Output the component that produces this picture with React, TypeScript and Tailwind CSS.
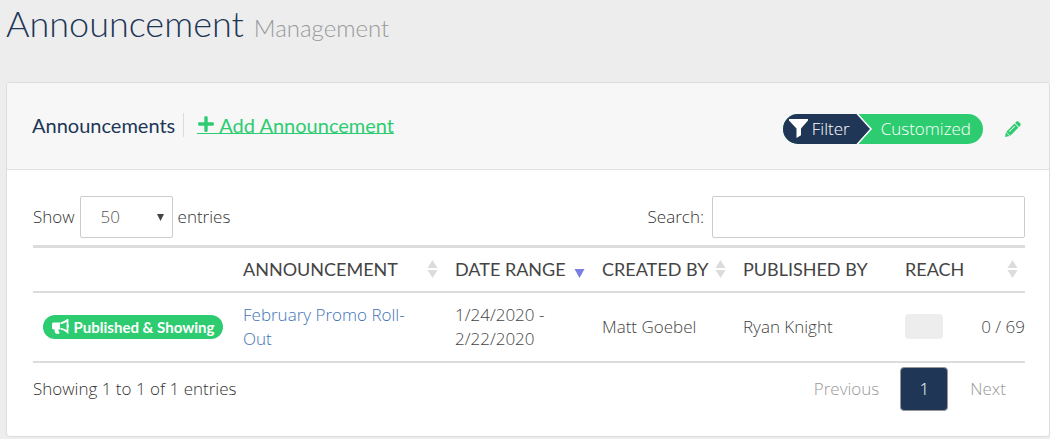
import React, { useState } from 'react';
import clsx from 'clsx';
import { FaPlus } from 'react-icons/fa';

type SortState = 'both' | 'desc' | 'none';

interface Column {
  label: string;
  width: string;
  sort: SortState;
}

const columns: Column[] = [
  { label: '', width: 'w-[200px]', sort: 'none' },
  { label: 'Announcement', width: '', sort: 'both' },
  { label: 'Date Range', width: 'w-[147px]', sort: 'desc' },
  { label: 'Created By', width: 'w-[141px]', sort: 'both' },
  { label: 'Published By', width: 'w-[162px]', sort: 'none' },
  { label: 'Reach', width: 'w-[130px]', sort: 'both' },
];

const announcements = [
  {
    id: 1,
    status: 'Published & Showing',
    title: 'February Promo Roll-Out',
    starts: '1/24/2020',
    ends: '2/22/2020',
    createdBy: 'Matt Goebel',
    publishedBy: 'Ryan Knight',
    reached: 0,
    audience: 69,
  },
];

const SortIcon: React.FC<{ state: SortState }> = ({ state }) => (
  <svg width="11" height="18" viewBox="0 0 11 18" className="shrink-0" aria-hidden="true">
    {state === 'both' && <path d="M5.500 0 10.500 8H.5z" fill="#dcdcdc" />}
    {state === 'both' && <path d="M.5 10h10l-5 8z" fill="#dcdcdc" />}
    {state === 'desc' && <path d="M.5 9h10l-5 9z" fill="#7b7fe0" />}
  </svg>
);

const FunnelIcon: React.FC = () => (
  <svg width="19" height="19" viewBox="0 0 19 19" fill="currentColor" aria-hidden="true">
    <path d="M0 0h19v1.500L12 9.500v6.700L7.500 19V9.500L0 1.500z" />
  </svg>
);

const PencilIcon: React.FC = () => (
  <svg width="16" height="16" viewBox="0 0 16 16" fill="currentColor" aria-hidden="true">
    <path d="M11.300.7c.6-.6 1.600-.6 2.200 0l1.800 1.800c.6.6.6 1.600 0 2.200l-1.200 1.200-4-4z" />
    <path d="M9.500 2.500l4 4-8.200 8.200-4-4zM9.600 4.700 4 10.300l.6.6 5.600-5.600z" fillRule="evenodd" />
    <path d="M1 11.300 4.700 15 0 16z" />
  </svg>
);

const MegaphoneIcon: React.FC = () => (
  <svg width="18" height="16" viewBox="0 0 18 16" fill="currentColor" aria-hidden="true">
    <path d="M8 3.500v7H6.300c.1 1.500.6 2.300 1.500 3.200-.8 1.500-3.100 1.600-4.200.8-.8-1.500-1.200-2.600-1-4H1.700C.7 10.500 0 9.800 0 8.800V5.200c0-1 .7-1.700 1.700-1.700z" />
    <path d="M8.500 4.300c2.800-.4 4.900-1.500 7-3.300v12c-2.100-1.800-4.200-2.900-7-3.300" fill="none" stroke="currentColor" strokeWidth="1.800" />
    <path d="M15.500 5.200c2 0 2 3.600 0 3.600z" />
  </svg>
);

const FilterPill: React.FC = () => (
  <button type="button" className="flex h-[30px] items-stretch overflow-hidden rounded-full bg-[#2ecc71] text-white">
    <span className="flex items-center gap-1 bg-[#203656] pl-[6px]">
      <FunnelIcon />
      <span>Filter</span>
    </span>
    <svg width="23" height="30" viewBox="0 0 23 30" aria-hidden="true">
      <path d="M0 0h7l14 15L7 30H0z" fill="#203656" />
      <path d="M7-.5 21 15 7 30.500" fill="none" stroke="#fff" strokeWidth="1.500" />
    </svg>
    <span className="flex items-center pr-3 pl-2">Customized</span>
  </button>
);

const App: React.FC = () => {
  const [pageSize, setPageSize] = useState('50');
  const [search, setSearch] = useState('');

  const rows = announcements.filter((a) => a.title.toLowerCase().includes(search.toLowerCase()));

  return (
    <div className="bg-[#ededed] pb-[2px] pl-[6px] font-['Open_Sans',sans-serif] text-[17px] leading-6 font-light text-[#333]">
      <h1 className="flex items-baseline gap-[10px] pb-[36px] font-['Lato',sans-serif] text-[36px] leading-[46px] font-light text-[#203656]">
        Announcement
        <small className="text-2xl text-[#999]">Management</small>
      </h1>

      <section className="rounded border border-[#dcdcdc] bg-white">
        <header className="flex h-[87px] items-center justify-between rounded-t border-b border-[#e2e2e2] bg-[#f7f7f7] pr-7 pl-[25px]">
          <div className="flex items-center pb-[3px] font-['Lato',sans-serif] text-xl leading-6 font-normal">
            <h2 className="border-r border-[#dcdcdc] pr-2 text-[#203656]">Announcements</h2>
            <a href="#add" className="ml-[13px] flex items-end gap-1 border-b border-[#2ecc71] leading-4 text-[#2ecc71]">
              <FaPlus className="h-[18px] w-[18px]" />
              Add Announcement
            </a>
          </div>
          <div className="flex items-center gap-[22px] pt-[5px]">
            <FilterPill />
            <button type="button" aria-label="Edit filter" className="text-[#2ecc71]">
              <PencilIcon />
            </button>
          </div>
        </header>

        <div className="pt-[26px] pr-6 pb-[25px] pl-[26px]">
          <div className="mb-[7px] flex items-center justify-between">
            <label className="flex items-center gap-[5px]">
              Show
              <span className="relative">
                <select
                  value={pageSize}
                  onChange={(e) => setPageSize(e.target.value)}
                  className="h-[42px] w-[93px] appearance-none rounded-xs border border-[#ccc] bg-white pl-5 text-[#555]"
                >
                  <option>10</option>
                  <option>25</option>
                  <option>50</option>
                  <option>100</option>
                </select>
                <svg width="7" height="7" viewBox="0 0 7 7" className="pointer-events-none absolute top-[18px] right-[9px]" aria-hidden="true">
                  <path d="M0 0h7L3.500 7z" fill="#444" />
                </svg>
              </span>
              entries
            </label>
            <label className="flex items-center gap-2">
              Search:
              <input
                type="search"
                value={search}
                onChange={(e) => setSearch(e.target.value)}
                className="h-[42px] w-[313px] rounded-xs border border-[#ccc] bg-white px-3"
              />
            </label>
          </div>

          <table className="w-full table-fixed border-collapse border-t-3 border-b-2 border-[#dcdcdc] text-left text-[#444]">
            <thead>
              <tr className="h-[45px] border-b-2 border-[#dcdcdc]">
                {columns.map((col) => (
                  <th key={col.label} className={clsx('pr-[7px] pl-[10px]', col.width)}>
                    <span className="flex items-center justify-between font-['Lato',sans-serif] text-lg leading-6 font-normal whitespace-nowrap text-[#444] uppercase">
                      {col.label}
                      {col.sort !== 'none' && <SortIcon state={col.sort} />}
                    </span>
                  </th>
                ))}
              </tr>
            </thead>
            <tbody>
              {rows.map((a) => (
                <tr key={a.id} className="h-[70px]">
                  <td className="px-[10px]">
                    <span className="flex h-6 items-center justify-center gap-1 rounded-full bg-[#2ecc71] font-['Lato',sans-serif] text-[15px] font-bold whitespace-nowrap text-white">
                      <MegaphoneIcon />
                      {a.status}
                    </span>
                  </td>
                  <td className="pr-6 pl-[10px]">
                    <a href="#announcement" className="text-[#3f73b7]">{a.title}</a>
                  </td>
                  <td className="px-[10px]">
                    {a.starts} - {a.ends}
                  </td>
                  <td className="px-[10px]">{a.createdBy}</td>
                  <td className="px-[10px]">{a.publishedBy}</td>
                  <td className="pl-[10px]">
                    <span className="flex items-center justify-between whitespace-nowrap">
                      <span className="h-[25px] w-[38px] rounded bg-[#ededed]" />
                      {a.reached} / {a.audience}
                    </span>
                  </td>
                </tr>
              ))}
            </tbody>
          </table>

          <div className="flex items-start justify-between pt-1">
            <p className="pt-[10px]">
              Showing 1 to {rows.length} of {rows.length} entries
            </p>
            <nav className="flex items-center pr-[19px] text-[#999]">
              <button type="button" className="pr-[21px]">Previous</button>
              <button type="button" className="h-11 w-12 rounded border border-[#979797] bg-[#203656] text-white">1</button>
              <button type="button" className="pl-[22px]">Next</button>
            </nav>
          </div>
        </div>
      </section>
    </div>
  );
};

export default App;
